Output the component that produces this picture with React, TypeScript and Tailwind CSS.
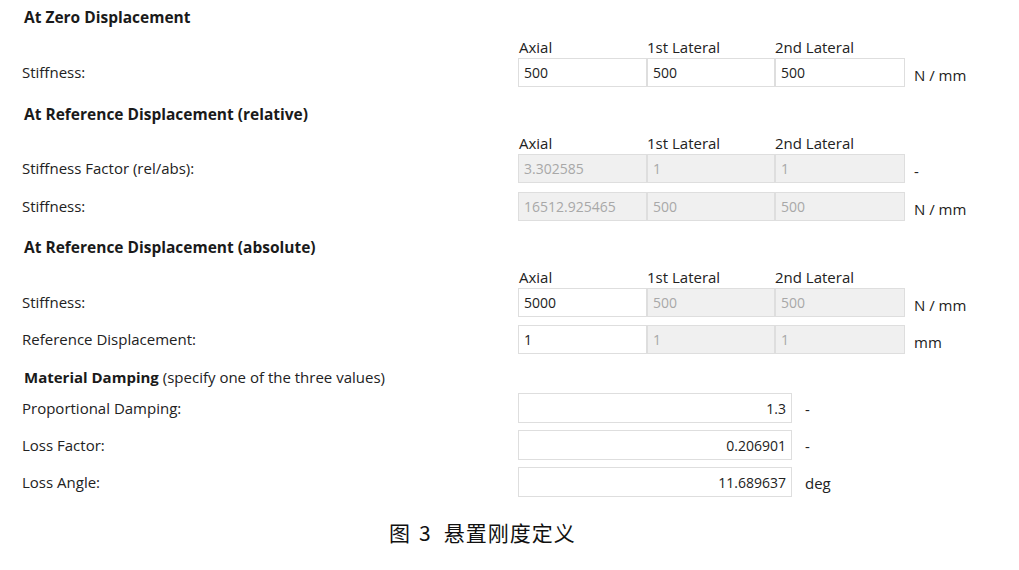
const font = { fontFamily: '"Open Sans", "Noto Sans", sans-serif' };

type Cell = { v: string; off?: boolean };

const Heading = ({ children, cls }: { children: React.ReactNode; cls: string }) => (
  <div className={`flex h-5 items-center pl-[24px] text-[15.5px] font-bold text-[#1a1a1a] ${cls}`}>
    {children}
  </div>
);

const ColHeads = ({ cls }: { cls: string }) => (
  <div className={`flex h-5 items-center text-[15px] text-[#222] ${cls}`}>
    <div className="w-[519px]" />
    <div className="w-[128px]">Axial</div>
    <div className="w-[128px]">1st Lateral</div>
    <div className="w-[130px]">2nd Lateral</div>
  </div>
);

const Box = ({ c, w }: { c: Cell; w: string }) => (
  <div
    className={`flex h-[29px] items-center border border-[#dedede] pl-[5px] text-[14px] ${w} ${
      c.off ? 'bg-[#f0f0f0] text-[#a8a8a8]' : 'bg-white text-[#222]'
    }`}
  >
    {c.v}
  </div>
);

const Row = ({ label, cells, unit, cls }: { label: string; cells: Cell[]; unit: string; cls: string }) => (
  <div className={`flex h-[29px] items-center text-[15px] text-[#222] ${cls}`}>
    <div className="w-[518px] pl-[22px]">{label}</div>
    <Box c={cells[0]} w="w-[129px]" />
    <Box c={cells[1]} w="w-[128px]" />
    <Box c={cells[2]} w="w-[130px]" />
    <div className="pl-[9px] pt-[6px] whitespace-pre">{unit}</div>
  </div>
);

const DampRow = ({ label, value, unit, cls }: { label: string; value: string; unit: string; cls: string }) => (
  <div className={`flex h-[30px] items-center text-[15px] text-[#222] ${cls}`}>
    <div className="w-[518px] pl-[22px]">{label}</div>
    <div className="flex h-[30px] w-[274px] items-center justify-end border border-[#dedede] bg-white pr-[5px] text-[14px]">
      {value}
    </div>
    <div className="pl-[13px] pt-[2px]">{unit}</div>
  </div>
);

export default function App() {
  return (
    <div className="h-[570px] w-[1019px] bg-white pt-[8px]" style={font}>
      <Heading cls="">At Zero Displacement</Heading>
      <ColHeads cls="mt-[9px]" />
      <Row label="Stiffness:" cells={[{ v: '500' }, { v: '500' }, { v: '500' }]} unit="N / mm" cls="mt-[1px]" />

      <Heading cls="mt-[18px]">At Reference Displacement (relative)</Heading>
      <ColHeads cls="mt-[8px]" />
      <Row
        label="Stiffness Factor (rel/abs):"
        cells={[{ v: '3.302585', off: true }, { v: '1', off: true }, { v: '1', off: true }]}
        unit="-"
        cls="mt-[1px]"
      />
      <Row
        label="Stiffness:"
        cells={[{ v: '16512.925465', off: true }, { v: '500', off: true }, { v: '500', off: true }]}
        unit="N / mm"
        cls="mt-[9px]"
      />

      <Heading cls="mt-[17px]">At Reference Displacement (absolute)</Heading>
      <ColHeads cls="mt-[9px]" />
      <Row
        label="Stiffness:"
        cells={[{ v: '5000' }, { v: '500', off: true }, { v: '500', off: true }]}
        unit="N / mm"
        cls="mt-[1px]"
      />
      <Row
        label="Reference Displacement:"
        cells={[{ v: '1' }, { v: '1', off: true }, { v: '1', off: true }]}
        unit="mm"
        cls="mt-[8px]"
      />

      <div className="mt-[13px] flex h-5 items-center pl-[24px] text-[15px] text-[#222]">
        <span className="font-bold text-[#1a1a1a]">Material Damping</span>
        <span className="ml-[4px]">(specify one of the three values)</span>
      </div>
      <DampRow label="Proportional Damping:" value="1.3" unit="-" cls="mt-[6px]" />
      <DampRow label="Loss Factor:" value="0.206901" unit="-" cls="mt-[7px]" />
      <DampRow label="Loss Angle:" value="11.689637" unit="deg" cls="mt-[7px]" />

      <div
        className="mt-[25px] flex items-center pl-[389px] text-[21px] leading-none text-[#111]"
        style={{ fontFamily: '"Noto Sans CJK SC", "Noto Sans", sans-serif' }}
      >
        <span>图</span>
        <span className="ml-[9px]">3</span>
        <span className="ml-[13px] tracking-[1px]">悬置刚度定义</span>
      </div>
    </div>
  );
}
